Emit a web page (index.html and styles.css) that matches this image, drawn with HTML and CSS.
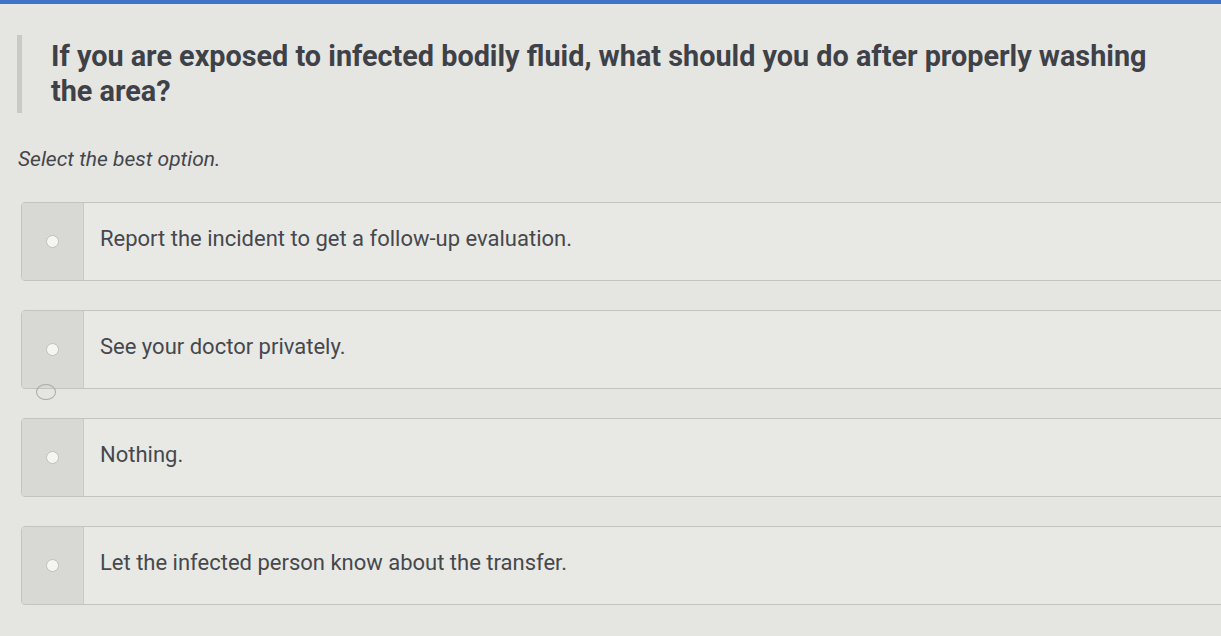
FILE: index.html
```html
<!DOCTYPE html>
<html lang="en">
<head>
  <meta charset="UTF-8">
  <title>Question</title>
  <link rel="stylesheet" href="styles.css">
</head>
<body>
  <div class="top-bar"></div>

  <!-- question prompt with the grey rule on its left -->
  <div class="question">
    <div class="rule"></div>
    <h1>If you are exposed to infected bodily fluid, what should you do after properly washing the area?</h1>
  </div>

  <p class="hint">Select the best option.</p>

  <div class="options">
    <label class="option">
      <span class="radio-cell"><span class="radio"></span></span>
      <span class="text">Report the incident to get a follow-up evaluation.</span>
    </label>
    <label class="option">
      <span class="radio-cell"><span class="radio"></span><span class="touch"></span></span>
      <span class="text">See your doctor privately.</span>
    </label>
    <label class="option">
      <span class="radio-cell"><span class="radio"></span></span>
      <span class="text">Nothing.</span>
    </label>
    <label class="option">
      <span class="radio-cell"><span class="radio"></span></span>
      <span class="text">Let the infected person know about the transfer.</span>
    </label>
  </div>
</body>
</html>
```

FILE: styles.css
```css
* {
  box-sizing: border-box;
  font-family: Roboto, 'Liberation Sans', sans-serif;
}

html, body {
  margin: 0;
  padding: 0;
  height: 100%;
  overflow: hidden;
}

body {
  background: #e5e5e1;
  color: #45474c;
}

.top-bar {
  height: 4px;
  background: #3f73c6;
}

.question {
  display: flex;
  gap: 29px;
  padding: 31px 60px 0 17px;
}

.question .rule {
  width: 5px;
  height: 78px;
  background: #c9c9c5;
  flex-shrink: 0;
}

.question h1 {
  margin: 4px 0 0;
  font-size: 28.8px;
  line-height: 35px;
  font-weight: 700;
  color: #3e4147;
}

.hint {
  margin: 34px 0 0 18px;
  font-size: 21px;
  font-style: italic;
  color: #44464b;
}

.options {
  display: flex;
  flex-direction: column;
  gap: 29px;
  margin: 31px -10px 0 21px;
}

.option {
  display: flex;
  height: 79px;
  border: 1px solid #c3c3bf;
  border-radius: 4px;
  background: #e8e8e5;
}

.radio-cell {
  position: relative;
  width: 62px;
  flex-shrink: 0;
  display: flex;
  align-items: center;
  justify-content: center;
  background: #d8d8d5;
  border-right: 1px solid #c9c9c5;
  border-radius: 3px 0 0 3px;
}

.radio {
  width: 13px;
  height: 13px;
  border-radius: 50%;
  background: #f5f5f3;
  border: 1.5px solid #c0c0bc;
}

.touch {
  position: absolute;
  left: 14px;
  bottom: -12px;
  width: 20px;
  height: 16px;
  border: 1.5px solid #a9aaa7;
  border-radius: 50%;
}

.text {
  display: flex;
  align-items: center;
  padding: 0 0 6px 16px;
  font-size: 22px;
  color: #46484d;
}
```
